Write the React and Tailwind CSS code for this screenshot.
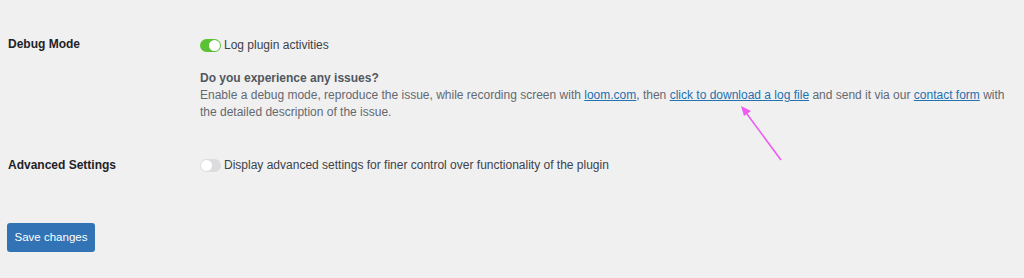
export default function App() {
  return (
    <div className="w-[1024px] h-[278px] bg-[#f0f0f0] text-[#3c434a] relative overflow-hidden" style={{ fontFamily: '"Liberation Sans", Arial, sans-serif' }}>
      <div className="pt-[35px] pl-[8px]">
        <div className="flex">
          <div className="w-[192px] text-[12px] font-bold text-[#1d2327] leading-[16px] pt-[1px]">Debug Mode</div>
          <div>
            <label className="flex items-center gap-[3px] text-[12px] leading-[16px] h-[18px] mt-[1px]">
              <span className="w-[21px] h-[13px] rounded-full bg-[#5bc236] flex items-center justify-end px-[1px]">
                <span className="w-[11px] h-[11px] rounded-full bg-white"></span>
              </span>
              <span>Log plugin activities</span>
            </label>
            <div className="mt-[16px] text-[12px] leading-[17px] text-[#646970]">
              <p className="font-bold text-[#50575e]">Do you experience any issues?</p>
              <p className="w-[812px]">
                Enable a debug mode, reproduce the issue, while recording screen with{' '}
                <a href="#" className="text-[#2271b1] underline">loom.com</a>, then{' '}
                <a href="#" className="text-[#2271b1] underline">click to download a log file</a> and send it via our{' '}
                <a href="#" className="text-[#2271b1] underline">contact form</a> with the detailed description of the issue.
              </p>
            </div>
          </div>
        </div>
        <div className="flex mt-[35px]">
          <div className="w-[192px] text-[12px] font-bold text-[#1d2327] leading-[16px] pt-[1px]">Advanced Settings</div>
          <label className="flex items-center gap-[3px] text-[12px] leading-[16px] h-[18px]">
            <span className="w-[21px] h-[13px] rounded-full bg-[#dcdcde] flex items-center justify-start px-[1px]">
              <span className="w-[11px] h-[11px] rounded-full bg-white"></span>
            </span>
            <span>Display advanced settings for finer control over functionality of the plugin</span>
          </label>
        </div>
        <button className="-ml-[1px] mt-[49px] w-[88px] h-[29px] rounded-[3px] bg-[#3173b5] text-white text-[11.5px]">Save changes</button>
      </div>
      <svg className="absolute left-[736px] top-[102px]" width="50" height="62" viewBox="0 0 50 62">
        <line x1="45" y1="58" x2="8" y2="8" stroke="#ec5cf2" strokeWidth="1.6" />
        <polygon points="5,4 15,9 8,14" fill="#ec5cf2" />
      </svg>
    </div>
  );
}
